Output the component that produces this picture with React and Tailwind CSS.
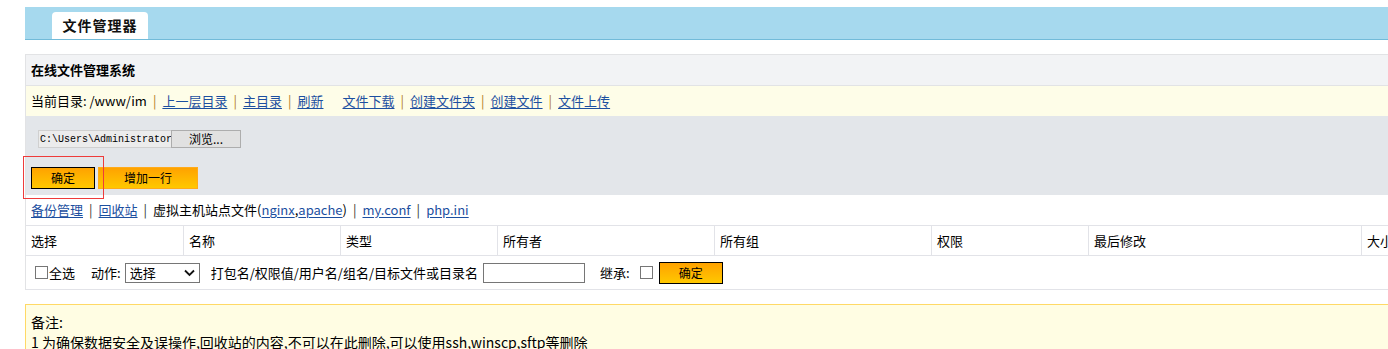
import React from 'react';

const font = { fontFamily: '"Noto Sans CJK SC", "Liberation Sans", sans-serif' };

const Sep = ({ dark }) => (
  <span className={`mx-[6px] ${dark ? 'text-[#333]' : 'text-[#b07a1a]'}`}>|</span>
);

const A = ({ children }) => (
  <a href="#" className="text-[#1c4fa0] underline underline-offset-2">
    {children}
  </a>
);

const cols = [
  ['选择', 157],
  ['名称', 157],
  ['类型', 157],
  ['所有者', 217],
  ['所有组', 217],
  ['权限', 157],
  ['最后修改', 273],
  ['大小', 100],
];

export default function App() {
  return (
    <div className="w-[1388px] h-[349px] overflow-hidden bg-white text-[13px] text-black" style={font}>
      <div className="w-[1420px] pl-[25px] pt-[7px]">
        {/* header bar */}
        <div className="h-[33px] bg-[#a6d9ee] border-b border-[#72bbd9] flex items-end pl-[27px]">
          <div className="h-[27px] w-[96px] bg-white rounded-t-[4px] flex items-center justify-center font-bold text-[14px] tracking-[1px] text-[#111]">
            文件管理器
          </div>
        </div>

        {/* main box */}
        <div className="mt-[14px] border-l border-t border-[#e2e3e5]">
          <div className="h-[31px] bg-[#f2f3f5] border-b border-[#e2e3e5] flex items-center pl-[5px] font-bold">
            在线文件管理系统
          </div>
          <div className="h-[30px] bg-[#fefde8] flex items-center pl-[5px] whitespace-nowrap">
            <span>当前目录: /www/im</span>
            <Sep />
            <A>上一层目录</A>
            <Sep />
            <A>主目录</A>
            <Sep />
            <A>刷新</A>
            <span className="w-[19px]" />
            <A>文件下载</A>
            <Sep />
            <A>创建文件夹</A>
            <Sep />
            <A>创建文件</A>
            <Sep />
            <A>文件上传</A>
          </div>

          {/* upload area */}
          <div className="h-[79px] bg-[#e3e6ea] pl-[12px] pt-[14px]">
            <div className="flex items-center h-[18px]">
              <div className="h-[18px] w-[133px] bg-[#ececec] border border-[#d0d0d0] border-r-0 flex items-center pl-[1px] text-[10px] overflow-hidden whitespace-nowrap" style={{ fontFamily: '"Liberation Mono", monospace' }}>
                C:\Users\Administrator
              </div>
              <div className="h-[18px] w-[70px] bg-[#e1e1e1] border border-[#adadad] flex items-center justify-center text-[12px]">
                浏览...
              </div>
            </div>
            <div className="relative mt-[19px] ml-[-7px] flex items-center gap-[3px]">
              <div className="absolute left-[-8px] top-[-11px] w-[81px] h-[43px] border border-[#ee3b3b]" />
              <button className="w-[64px] h-[22px] border border-black bg-gradient-to-b from-[#ffa200] to-[#ffc800] text-[12px]">
                确定
              </button>
              <button className="w-[100px] h-[22px] border border-[#ffab1a] bg-gradient-to-b from-[#ffa200] to-[#ffc800] text-[12px]">
                增加一行
              </button>
            </div>
          </div>

          {/* links */}
          <div className="h-[30px] flex items-center pl-[5px] whitespace-nowrap">
            <A>备份管理</A>
            <Sep dark />
            <A>回收站</A>
            <Sep dark />
            <span>虚拟主机站点文件(</span>
            <A>nginx</A>
            <span>,</span>
            <A>apache</A>
            <span>)</span>
            <Sep dark />
            <A>my.conf</A>
            <Sep dark />
            <A>php.ini</A>
          </div>

          {/* table */}
          <div className="border-t border-[#e2e3e8] flex h-[31px] border-b">
            {cols.map(([t, w], i) => (
              <div
                key={t}
                className={`shrink-0 flex items-center pl-[5px] ${i > 0 ? 'border-l border-[#e2e3e8]' : ''}`}
                style={{ width: w }}
              >
                {t}
              </div>
            ))}
          </div>
          <div className="h-[34px] flex items-center pl-[9px] border-b border-[#e2e3e8] whitespace-nowrap">
            <span className="w-[13px] h-[13px] border border-[#767676] bg-white inline-block" />
            <span className="ml-[1px]">全选</span>
            <span className="ml-[16px]">动作:</span>
            <div className="ml-[4px] w-[75px] h-[20px] border border-[#767676] bg-white flex items-center justify-between px-[4px]">
              <span>选择</span>
              <svg width="11" height="8" viewBox="0 0 11 8">
                <path d="M1 1.5 L5.5 6 L10 1.5" fill="none" stroke="#111" strokeWidth="1.8" />
              </svg>
            </div>
            <span className="ml-[11px]">打包名/权限值/用户名/组名/目标文件或目录名</span>
            <span className="ml-[5px] w-[102px] h-[20px] border border-[#767676] bg-white inline-block" />
            <span className="ml-[15px]">继承:</span>
            <span className="ml-[10px] w-[13px] h-[13px] border border-[#767676] bg-white inline-block" />
            <button className="ml-[6px] w-[64px] h-[22px] border border-black bg-gradient-to-b from-[#ffa200] to-[#ffc800] text-[12px]">
              确定
            </button>
          </div>
        </div>

        {/* notes */}
        <div className="mt-[14px] border-t border-l border-[#ffd966] bg-[#fffde3] pl-[5px] pt-[7px] leading-[20px] text-[14px]">
          <div>备注:</div>
          <div>1 为确保数据安全及误操作,回收站的内容,不可以在此删除,可以使用ssh,winscp,sftp等删除</div>
        </div>
      </div>
    </div>
  );
}
